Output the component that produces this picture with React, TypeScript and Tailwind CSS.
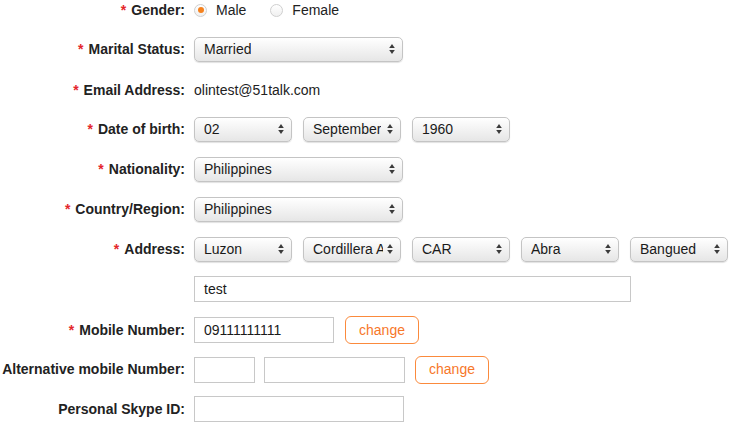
import type { ReactNode } from 'react'

function Arrows() {
  return (
    <svg width="6" height="11" viewBox="0 0 6 11" className="absolute right-[7px] top-1/2 -translate-y-1/2">
      <path d="M3 0.5 L5.8 4.5 L0.2 4.5 Z" fill="#3a3a3a" />
      <path d="M3 10.5 L5.8 6.5 L0.2 6.5 Z" fill="#3a3a3a" />
    </svg>
  )
}

function FakeSelect({ value, width }: { value: string; width: string }) {
  return (
    <div
      className={`relative h-[25px] ${width} shrink-0 rounded-[5px] border border-[#c4c4c4] bg-gradient-to-b from-white to-[#e6e6e6] shadow-[0_1px_1px_rgba(0,0,0,0.12)] pl-[9px] pr-[17px] flex items-center`}
    >
      <span className="block min-w-0 overflow-hidden whitespace-nowrap text-[14px] text-[#1a1a1a]">{value}</span>
      <Arrows />
    </div>
  )
}

function TextBox({ value = '', width }: { value?: string; width: string }) {
  return (
    <div className={`h-[26px] ${width} shrink-0 border border-[#c8c8c8] bg-white pl-[9px] flex items-center text-[14px] text-[#1a1a1a]`}>
      {value}
    </div>
  )
}

function ChangeButton() {
  return (
    <button className="h-[28px] w-[74px] shrink-0 rounded-[6px] border border-[#fb8a3c] bg-white text-[14px] text-[#f7772a]">
      change
    </button>
  )
}

function Radio({ checked }: { checked?: boolean }) {
  return (
    <span className="flex h-[13px] w-[13px] items-center justify-center rounded-full border border-[#cfcfcf] bg-gradient-to-b from-white to-[#f0f0f0]">
      {checked && <span className="h-[6px] w-[6px] rounded-full bg-[#f5821f]" />}
    </span>
  )
}

function Row({ label, required, children, height = 'h-10' }: { label: string; required?: boolean; children: ReactNode; height?: string }) {
  return (
    <div className={`flex items-center ${height}`}>
      <div className="w-[185px] shrink-0 text-right text-[14px] font-bold text-[#222] whitespace-nowrap">
        {required && <span className="mr-[5px] text-[#e4262c]">*</span>}
        {label}
      </div>
      <div className="ml-[9px] flex items-center gap-[11px]">{children}</div>
    </div>
  )
}

export default function App() {
  return (
    <div className="h-[425px] w-[735px] overflow-hidden bg-white font-['Liberation_Sans',Arial,sans-serif] text-[#222]">
      {/* Gender */}
      <Row label="Gender:" required height="h-5 mb-[9px]">
        <div className="flex items-center text-[14px]">
          <Radio checked />
          <span className="ml-[9px]">Male</span>
          <span className="ml-[24px]">
            <Radio />
          </span>
          <span className="ml-[9px]">Female</span>
        </div>
      </Row>

      <Row label="Marital Status:" required>
        <FakeSelect value="Married" width="w-[209px]" />
      </Row>

      <Row label="Email Address:" required height="h-10 pt-[2px]">
        <span className="text-[14px]">olintest@51talk.com</span>
      </Row>

      <Row label="Date of birth:" required>
        <FakeSelect value="02" width="w-[98px]" />
        <FakeSelect value="September" width="w-[98px]" />
        <FakeSelect value="1960" width="w-[98px]" />
      </Row>

      <Row label="Nationality:" required>
        <FakeSelect value="Philippines" width="w-[209px]" />
      </Row>

      <Row label="Country/Region:" required>
        <FakeSelect value="Philippines" width="w-[209px]" />
      </Row>

      <Row label="Address:" required>
        <FakeSelect value="Luzon" width="w-[98px]" />
        <FakeSelect value="Cordillera Administrative Region" width="w-[98px]" />
        <FakeSelect value="CAR" width="w-[98px]" />
        <FakeSelect value="Abra" width="w-[98px]" />
        <FakeSelect value="Bangued" width="w-[98px]" />
      </Row>

      <Row label="">
        <TextBox value="test" width="w-[437px]" />
      </Row>

      <Row label="Mobile Number:" required height="h-10 pt-[2px]">
        <TextBox value="09111111111" width="w-[140px]" />
        <ChangeButton />
      </Row>

      <Row label="Alternative mobile Number:" height="h-10 pt-[1px]">
        <div className="flex items-center gap-[9px]">
          <TextBox width="w-[61px]" />
          <TextBox width="w-[141px]" />
        </div>
        <span className="-ml-[1px]">
          <ChangeButton />
        </span>
      </Row>

      <Row label="Personal Skype ID:">
        <TextBox width="w-[210px]" />
      </Row>
    </div>
  )
}
